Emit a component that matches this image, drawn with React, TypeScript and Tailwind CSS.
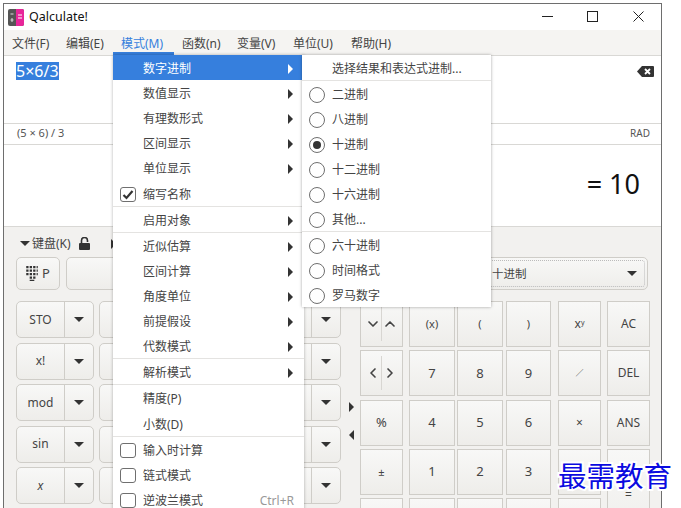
import { ChevronDown, ChevronUp, ChevronLeft, ChevronRight } from 'lucide-react'

const FONT = "font-['Noto_Sans','Noto_Sans_CJK_SC',sans-serif]"

const menuBar = [
  { label: '文件(F)', w: 'w-[54px]' },
  { label: '编辑(E)', w: 'w-[55px]' },
  { label: '模式(M)', w: 'w-[61px]' },
  { label: '函数(n)', w: 'w-[55px]' },
  { label: '变量(V)', w: 'w-[56px]' },
  { label: '单位(U)', w: 'w-[58px]' },
  { label: '帮助(H)', w: 'w-[60px]' },
]

type MenuRow =
  | { sep: true }
  | { label: string; arrow?: boolean; check?: boolean; checked?: boolean; active?: boolean; hint?: string; sep?: false }

const modeMenu: MenuRow[] = [
  { label: '数字进制', arrow: true, active: true },
  { label: '数值显示', arrow: true },
  { label: '有理数形式', arrow: true },
  { label: '区间显示', arrow: true },
  { label: '单位显示', arrow: true },
  { label: '缩写名称', check: true, checked: true },
  { sep: true },
  { label: '启用对象', arrow: true },
  { sep: true },
  { label: '近似估算', arrow: true },
  { label: '区间计算', arrow: true },
  { label: '角度单位', arrow: true },
  { label: '前提假设', arrow: true },
  { label: '代数模式', arrow: true },
  { sep: true },
  { label: '解析模式', arrow: true },
  { sep: true },
  { label: '精度(P)' },
  { label: '小数(D)' },
  { sep: true },
  { label: '输入时计算', check: true },
  { label: '链式模式', check: true },
  { label: '逆波兰模式', check: true, hint: 'Ctrl+R' },
]

const baseGroups = [
  ['二进制', '八进制', '十进制', '十二进制', '十六进制', '其他...'],
  ['六十进制', '时间格式', '罗马数字'],
]

const leftLabels = ['STO', 'x!', 'mod', 'sin', 'x', '']

const btn =
  'flex items-center justify-center border border-[#cfcdc8] bg-gradient-to-b from-[#f8f8f7] to-[#eeedea] text-[#444]'

function Tri({ dir, className }: { dir: 'right' | 'down' | 'left'; className?: string }) {
  const pts = dir === 'right' ? '1,0 6,5 1,10' : dir === 'left' ? '6,0 1,5 6,10' : '0,1 10,1 5,6'
  const size = dir === 'down' ? { width: 10, height: 7 } : { width: 7, height: 10 }
  return (
    <svg {...size} className={className} fill="currentColor">
      <polygon points={pts} />
    </svg>
  )
}

function Check({ checked }: { checked?: boolean }) {
  return (
    <span className="flex h-[15px] w-[16px] items-center justify-center rounded-[3px] border-[1.5px] border-[#6f6f6f] bg-white">
      {checked && (
        <svg width="12" height="10" viewBox="0 0 12 10" fill="none" stroke="#333" strokeWidth="2.2">
          <path d="M1.5 5l3 3 6-7" />
        </svg>
      )}
    </span>
  )
}

function Radio({ checked }: { checked?: boolean }) {
  return (
    <span className="flex h-[16px] w-[16px] items-center justify-center rounded-full border-[1.5px] border-[#6f6f6f] bg-white">
      {checked && <span className="h-[8px] w-[8px] rounded-full bg-[#333]" />}
    </span>
  )
}

function SplitButton({ label }: { label: string }) {
  return (
    <div className={`${btn} h-[37px] w-[78px] rounded-[5px]`}>
      <span className={`flex-1 text-center text-[12px] ${label === 'x' ? 'italic' : ''}`}>{label}</span>
      <span className="flex h-full w-[29px] items-center justify-center border-l border-[#cfcdc8] text-[#333]">
        <Tri dir="down" />
      </span>
    </div>
  )
}

function PadKey({ children, size = 'text-[13px]' }: { children?: React.ReactNode; size?: string }) {
  return <div className={`${btn} h-[46px] w-full ${size}`}>{children}</div>
}

function PairKey({ a, b }: { a: React.ReactNode; b: React.ReactNode }) {
  return (
    <div className={`${btn} h-[46px] w-full text-[#333]`}>
      {a}
      <span className="h-[34px] w-px bg-[#d8d6d2]" />
      {b}
    </div>
  )
}

export default function App() {
  return (
    <div className={`${FONT} relative h-[508px] w-[681px] overflow-hidden bg-white`}>
      <div className="ml-[3px] mt-[3px] flex h-[505px] w-[659px] flex-col border-x border-t border-[#6e6e6e]">
        {/* title bar */}
        <div className="flex h-[26px] shrink-0 items-center bg-white pl-[4px]">
          <svg width="16" height="17" viewBox="0 0 16 17">
            <rect width="16" height="17" rx="2" fill="#555" />
            <path d="M8 0h6a2 2 0 0 1 2 2v13a2 2 0 0 1-2 2H8z" fill="#e8259a" />
            <path d="M10 6h4M10 9h4" stroke="#fff" strokeWidth="1.2" />
            <path d="M2.5 5h3M2.5 11h3M4 9v4" stroke="#ddd" strokeWidth="1" />
          </svg>
          <span className="ml-[5px] text-[12.5px] text-[#111]">Qalculate!</span>
          <div className="mb-[2px] ml-auto flex items-center">
            <svg width="12" height="12" className="mr-[34px]" stroke="#222" strokeWidth="1">
              <path d="M1 6.5h11" />
            </svg>
            <svg width="11" height="11" className="mr-[35px]" fill="none" stroke="#222" strokeWidth="1">
              <rect x="0.5" y="0.5" width="10" height="10" />
            </svg>
            <svg width="11" height="11" className="mr-[17px]" stroke="#222" strokeWidth="1">
              <path d="M0.5 0.5l10 10M10.5 0.5l-10 10" />
            </svg>
          </div>
        </div>

        {/* menu bar */}
        <div className="flex h-[26px] shrink-0 border-b border-[#d9d8d5] bg-[#f5f4f2] text-[12px] text-[#444]">
          {menuBar.map((m) => (
            <div
              key={m.label}
              className={`flex h-full items-center pl-[8px] pt-[2px] ${m.w} ${
                m.label === '模式(M)' ? 'text-[#367fdd] shadow-[inset_0_-3px_0_#367fdd]' : ''
              }`}
            >
              {m.label}
            </div>
          ))}
        </div>

        {/* expression */}
        <div className="flex h-[67px] shrink-0 items-start justify-between bg-white pl-[12px] pr-[7px] pt-[6px]">
          <span className="flex h-[18px] items-center bg-[#367fdd] text-[16px] text-white">5×6/3</span>
          <svg width="17" height="11" viewBox="0 0 17 11" className="mt-[4px]">
            <path d="M5 0h11a1 1 0 0 1 1 1v9a1 1 0 0 1-1 1H5L0 5.5z" fill="#333" />
            <path d="M8 3l5 5M13 3l-5 5" stroke="#fff" strokeWidth="1.8" />
          </svg>
        </div>

        {/* status */}
        <div className="flex h-[22px] shrink-0 items-center justify-between border-y border-[#d9d8d5] bg-white pb-px pl-[13px] pr-[11px] text-[11px] text-[#555]">
          <span>(5 × 6) / 3</span>
          <span className="text-[10px]">RAD</span>
        </div>

        {/* result */}
        <div className="flex h-[82px] shrink-0 items-center justify-end border-b border-[#d9d8d5] bg-white pb-[3px] pr-[21px] text-[27px] text-[#111]">
          = 10
        </div>

        {/* keypad */}
        <div className="min-h-0 flex-1 overflow-hidden bg-[#f2f1ef] pl-[12px]">
          <div className="flex h-[30px] items-center pl-[4px] pt-[3px] text-[12px] text-[#444]">
            <Tri dir="down" className="text-[#333]" />
            <span className="ml-[2px]">键盘(K)</span>
            <svg width="11" height="13" viewBox="0 0 11 13" className="ml-[8px]">
              <rect x="0" y="6" width="11" height="7" rx="1" fill="#333" />
              <path d="M2.5 6V3.5a3 3 0 0 1 6 0V5" fill="none" stroke="#333" strokeWidth="1.6" />
            </svg>
            <Tri dir="right" className="ml-[20px] text-[#333]" />
          </div>

          <div className="flex h-[33px] gap-[6px]">
            <div className={`${btn} h-full w-[44px] gap-[4px] rounded-[5px] text-[13px]`}>
              <svg width="12" height="15" viewBox="0 0 10 13" fill="#333">
                <path d="M0 0h2v2H0zM3 0h2v2H3zM6 0h2v2H6zM9 0h1v2H9zM0 3h2v2H0zM3 3h2v2H3zM6 3h2v2H6zM9 3h1v2H9zM0 6h2v2H0zM3 6h2v2H3zM6 6h2v2H6zM9 6h1v2H9zM3 9h2v2H3zM6 9h2v2H6zM3 12h4v1H3z" />
              </svg>
              P
            </div>
            <div className={`${btn} h-full w-[134px] rounded-[5px]`} />
            <div className={`${btn} relative h-full w-[442px] justify-start rounded-[5px] pl-[285px] text-[11.5px]`}>
              十进制
              <Tri dir="down" className="ml-auto mr-[10px] text-[#333]" />
              <span className="absolute inset-[2px] rounded-[3px] border border-dotted border-[#bbb]" />
            </div>
          </div>

          <div className="mt-[11px] flex">
            <div className="flex gap-[5px]">
              <div className="flex flex-col gap-[4.5px]">
                {leftLabels.map((l, i) => (
                  <SplitButton key={i} label={l} />
                ))}
              </div>
              <div className="flex gap-[4px]">
                {[0, 1, 2].map((c) => (
                  <div key={c} className="flex flex-col gap-[4.5px]">
                    {leftLabels.map((_, i) => (
                      <SplitButton key={i} label="" />
                    ))}
                  </div>
                ))}
              </div>
            </div>

            <div className="flex w-[19px] flex-col items-center pl-[2px] pt-[101px] text-[#333]">
              <Tri dir="right" />
              <Tri dir="left" className="mt-[18px]" />
            </div>

            <div className="flex w-[43px] flex-col gap-[3.3px]">
              <PairKey a={<ChevronDown size={16} strokeWidth={2.5} />} b={<ChevronUp size={16} strokeWidth={2.5} />} />
              <PairKey a={<ChevronLeft size={16} strokeWidth={2.5} />} b={<ChevronRight size={16} strokeWidth={2.5} />} />
              <PadKey>%</PadKey>
              <PadKey size="text-[11px]">±</PadKey>
              <PadKey />
            </div>

            <div className="ml-[6px] flex w-[46px] flex-col gap-[3.3px]">
              <PadKey size="text-[11px]">(x)</PadKey>
              <PadKey>7</PadKey>
              <PadKey>4</PadKey>
              <PadKey>1</PadKey>
              <PadKey />
            </div>
            <div className="ml-[2px] flex w-[46px] flex-col gap-[3.3px]">
              <PadKey size="text-[11px]">(</PadKey>
              <PadKey>8</PadKey>
              <PadKey>5</PadKey>
              <PadKey>2</PadKey>
              <PadKey />
            </div>
            <div className="ml-[3px] flex w-[45px] flex-col gap-[3.3px]">
              <PadKey size="text-[11px]">)</PadKey>
              <PadKey>9</PadKey>
              <PadKey>6</PadKey>
              <PadKey>3</PadKey>
              <PadKey />
            </div>
            <div className="ml-[7px] flex w-[43px] flex-col gap-[3.3px]">
              <PadKey size="text-[12px]">
                <span>
                  x<sup className="text-[7px]">y</sup>
                </span>
              </PadKey>
              <PadKey size="text-[8px]">∕</PadKey>
              <PadKey size="text-[12px]">×</PadKey>
              <PadKey />
              <PadKey />
            </div>
            <div className="ml-[6px] flex w-[43px] flex-col gap-[3.3px]">
              <PadKey size="text-[12px]">AC</PadKey>
              <PadKey size="text-[12px]">DEL</PadKey>
              <PadKey size="text-[12px]">ANS</PadKey>
              <div className={`${btn} h-[93px] w-full text-[12px]`}>=</div>
            </div>
          </div>
        </div>
      </div>

      {/* mode menu */}
      <div className="absolute left-[113px] top-[55px] flex w-[191px] flex-col bg-white text-[12px] text-[#444] shadow-[0_0_3px_rgba(0,0,0,0.3)]">
        {modeMenu.map((r, i) =>
          r.sep ? (
            <div key={i} className="h-px bg-[#e4e3e1]" />
          ) : (
            <div
              key={i}
              className={`flex h-[25.12px] shrink-0 items-center pl-[7px] pr-[10px] pt-[3px] ${r.active ? 'bg-[#367fdd] text-white' : ''}`}
            >
              <span className="flex w-[23px]">{r.check && <Check checked={r.checked} />}</span>
              <span>{r.label}</span>
              {r.hint && <span className="ml-auto text-[12px] text-[#999]">{r.hint}</span>}
              {r.arrow && <Tri dir="right" className={`ml-auto ${r.active ? 'text-white' : 'text-[#333]'}`} />}
            </div>
          ),
        )}
      </div>

      {/* base submenu */}
      <div className="absolute left-[302px] top-[55px] flex w-[189px] flex-col bg-white text-[12px] text-[#444] shadow-[0_0_3px_rgba(0,0,0,0.35)]">
        <div className="flex h-[25px] items-center pl-[30px] pt-[3px]">选择结果和表达式进制...</div>
        {baseGroups.map((g, gi) => (
          <div key={gi} className="flex flex-col">
            <div className="h-px bg-[#e4e3e1]" />
            {g.map((label) => (
              <div key={label} className="flex h-[25px] items-center pl-[7px] pt-[3px]">
                <Radio checked={label === '十进制'} />
                <span className="ml-[7px]">{label}</span>
              </div>
            ))}
          </div>
        ))}
      </div>

      {/* watermark */}
      <div className="absolute left-[558px] top-[459px] text-[28.5px] leading-[34px] text-[#0a0ae0] [-webkit-text-stroke:4px_white] [paint-order:stroke_fill]">
        最需教育
      </div>
    </div>
  )
}
